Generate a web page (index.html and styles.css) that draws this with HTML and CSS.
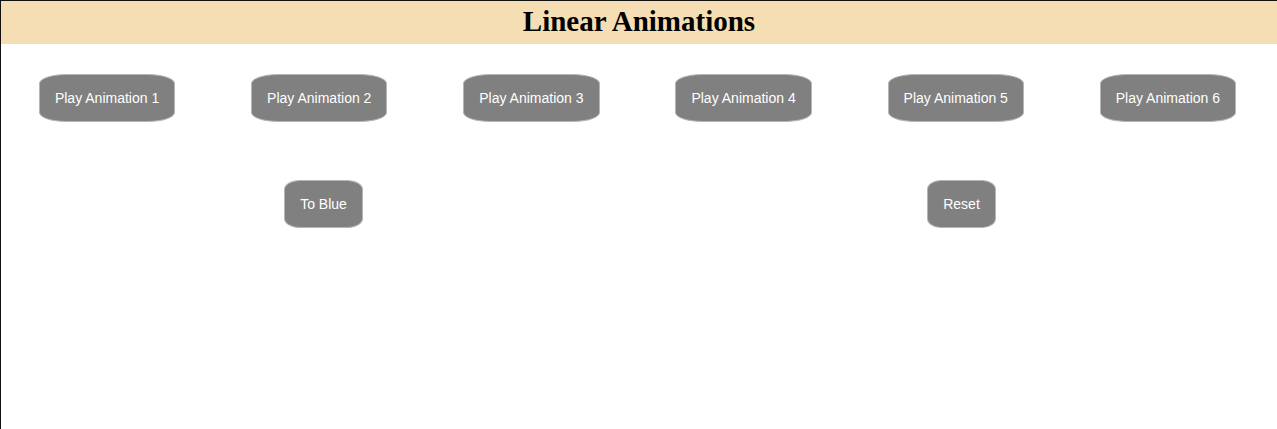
FILE: index.html
```html
<!DOCTYPE html>
<html>
<head>
<meta charset="utf-8">
<title>Linear Animations</title>
<link rel="stylesheet" href="styles.css">
</head>
<body>
<header class="header">
  <h1 class="title">Linear Animations</h1>
</header>
<main class="content">
  <div class="row row-six">
    <div class="cell"><button class="btn">Play Animation 1</button></div>
    <div class="cell"><button class="btn">Play Animation 2</button></div>
    <div class="cell"><button class="btn">Play Animation 3</button></div>
    <div class="cell"><button class="btn">Play Animation 4</button></div>
    <div class="cell"><button class="btn">Play Animation 5</button></div>
    <div class="cell"><button class="btn">Play Animation 6</button></div>
  </div>
  <div class="row row-two">
    <div class="cell cell-shift"><button class="btn">To Blue</button></div>
    <div class="cell cell-shift"><button class="btn">Reset</button></div>
  </div>
</main>
</body>
</html>
```

FILE: styles.css
```css
html, body {
  margin: 0;
  padding: 0;
  height: 100%;
}
body {
  box-sizing: border-box;
  border-top: 1px solid #111;
  border-left: 1px solid #111;
  background: #fff;
  font-family: "Liberation Serif", "Times New Roman", serif;
}
.header {
  background: #f5deb3;
  height: 43px;
  display: flex;
  align-items: center;
  justify-content: center;
}
.title {
  margin: 0;
  font-size: 29px;
  font-weight: bold;
  line-height: 1;
  color: #000;
  padding-bottom: 2px;
}
.content {
  padding-top: 30px;
}
.row {
  display: grid;
}
.row-six {
  grid-template-columns: repeat(6, 1fr);
  padding-right: 3px;
}
.row-two {
  grid-template-columns: repeat(2, 1fr);
  margin-top: 58px;
}
.cell {
  display: flex;
  justify-content: center;
}
.cell-shift {
  padding-left: 7px;
}
.btn {
  font-family: "Liberation Sans", Arial, sans-serif;
  font-size: 14px;
  line-height: 17px;
  color: #fff;
  background: #808080;
  border: 1px solid #b5b5b5;
  border-radius: 20%;
  padding: 15px 15px 14px;
  margin: 0;
  cursor: pointer;
}
```
